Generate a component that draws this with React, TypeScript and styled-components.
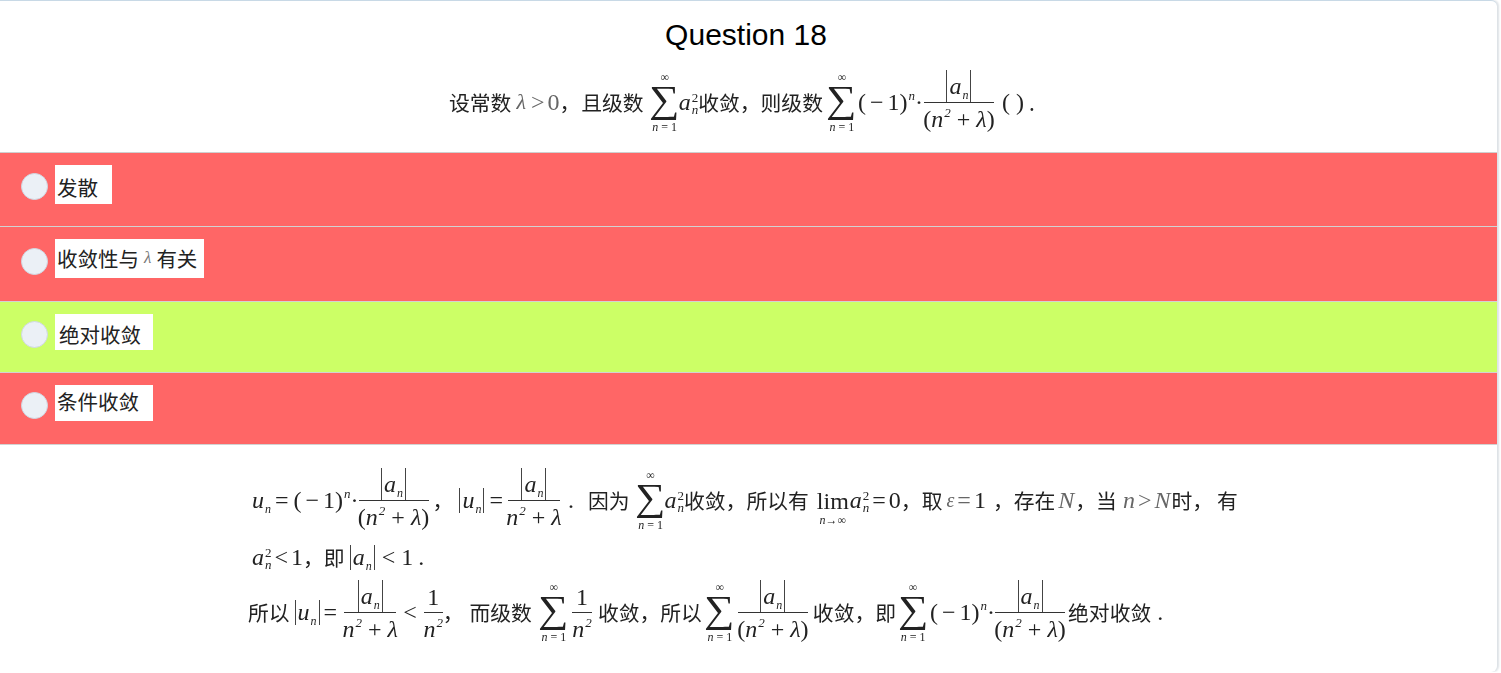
import React, { FC, ReactNode } from "react";
import styled, { createGlobalStyle } from "styled-components";

const GlobalStyle = createGlobalStyle`
  html, body { margin: 0; padding: 0; background: #fff; overflow: hidden; }
  body { font-family: "Liberation Sans", Arial, sans-serif; }
`;

const Card = styled.div`
  width: 1497px;
  height: 672px;
  box-sizing: border-box;
  background: #fff;
  border-top: 1px solid #c8d9e6;
  border-radius: 0 6px 6px 0;
  box-shadow: 2px 0 2px #dde2e6;
  overflow: hidden;
`;

const Title = styled.h2`
  margin: 0;
  height: 65px;
  padding-top: 16px;
  padding-right: 5px;
  box-sizing: border-box;
  text-align: center;
  font-size: 30px;
  line-height: 36px;
  font-weight: 400;
  color: #000;
`;

const Question = styled.div`
  height: 86px;
  box-sizing: border-box;
  padding: 0 0 14px 449px;
  display: flex;
`;

const Options = styled.div`
  display: flex;
  flex-direction: column;
  border-top: 1px solid #cfcfcf;
`;

const OptionRow = styled.div<{ $h: number; $ok?: boolean }>`
  height: ${(p) => p.$h}px;
  box-sizing: border-box;
  padding: 12px 0 0 21px;
  display: flex;
  align-items: flex-start;
  background: ${(p) => (p.$ok ? "#ccff66" : "#ff6666")};
  border-bottom: 1px solid #d2d2d2;
`;

const Radio = styled.span<{ $top: number }>`
  width: 27px;
  height: 27px;
  margin-top: ${(p) => p.$top}px;
  margin-right: 7px;
  box-sizing: border-box;
  border-radius: 50%;
  background: #ebf0f6;
  border: 1px solid #cfd8e3;
  flex: none;
`;

const OptionLabel = styled.span<{ $w: number; $h: number; $lead?: number; $down?: number; $up?: number }>`
  width: ${(p) => p.$w}px;
  height: ${(p) => p.$h}px;
  box-sizing: border-box;
  padding: ${(p) => p.$down ?? 0}px 0 ${(p) => p.$up ?? 0}px ${(p) => p.$lead ?? 2}px;
  background: #fff;
  display: flex;
  align-items: center;
  font-family: "Noto Sans CJK SC", sans-serif;
  font-size: 20.5px;
  color: #222;
  white-space: nowrap;
`;

const LabelSymbol = styled.i`
  margin: 0 5px;
  font-family: "Liberation Serif", serif;
  font-size: 17px;
  color: #777;
`;

const Explain = styled.div`
  padding: 14px 0 0 252px;
  display: flex;
  flex-direction: column;
`;

const MathLine = styled.div<{ $h: number; $shift?: number }>`
  height: ${(p) => p.$h}px;
  margin-left: ${(p) => p.$shift ?? 0}px;
  display: flex;
  align-items: center;
  white-space: nowrap;
  font-family: "Liberation Serif", serif;
  font-size: 24px;
  color: #222;
  filter: blur(0.35px);
`;

const Cjk = styled.span<{ $l?: number; $r?: number }>`
  font-family: "Noto Sans CJK SC", sans-serif;
  font-size: 20.8px;
  margin: 0 ${(p) => p.$r ?? 0}px 0 ${(p) => p.$l ?? 0}px;
`;

const Mi = styled.i<{ $size?: number; $light?: boolean }>`
  font-size: ${(p) => p.$size ?? 24}px;
  color: ${(p) => (p.$light ? "#666" : "inherit")};
`;

const Mo = styled.span<{ $l?: number; $r?: number; $light?: boolean }>`
  margin: 0 ${(p) => p.$r ?? 0}px 0 ${(p) => p.$l ?? 0}px;
  color: ${(p) => (p.$light ? "#666" : "inherit")};
`;

const Sub = styled.i`
  font-size: 12px;
  line-height: 0;
  vertical-align: -5px;
  margin-left: 1px;
`;

const Sup = styled.i`
  font-size: 13px;
  line-height: 0;
  vertical-align: 10px;
  margin-left: 1px;
`;

const Script = styled.span`
  display: inline-flex;
  flex-direction: column;
  font-size: 13px;
  line-height: 12px;
  margin-left: 1px;
  padding-top: 3px;
`;

const ScriptSlot = styled.span<{ $italic?: boolean }>`
  height: 12px;
  font-style: ${(p) => (p.$italic ? "italic" : "normal")};
`;

const FracBox = styled.span<{ $w: number; $l?: number }>`
  width: ${(p) => p.$w}px;
  margin-left: ${(p) => p.$l ?? 0}px;
  display: inline-flex;
  flex-direction: column;
  align-items: center;
  flex: none;
`;

const FracTop = styled.span`
  height: 34px;
  width: 100%;
  display: flex;
  justify-content: center;
  align-items: flex-end;
  border-bottom: 1px solid #333;
`;

const FracBottom = styled.span`
  height: 33px;
  display: flex;
  align-items: center;
`;

const Bars = styled.span<{ $h: number }>`
  display: inline-flex;
  align-items: center;
  height: ${(p) => p.$h}px;
  padding: 0 2px;
  border-left: 1.5px solid #444;
  border-right: 1.5px solid #444;
`;

const SumBox = styled.span<{ $r?: number }>`
  width: 32px;
  margin-right: ${(p) => p.$r ?? -2}px;
  display: inline-flex;
  flex-direction: column;
  align-items: center;
  flex: none;
`;

const SumLimit = styled.span`
  font-size: 12px;
  line-height: 12px;
  height: 12px;
  white-space: nowrap;
`;

const SumGlyph = styled.span`
  font-size: 38px;
  line-height: 32px;
  height: 38px;
  transform: scaleX(1.12);
`;

const LimBox = styled.span`
  display: inline-flex;
  flex-direction: column;
  align-items: center;
  padding-top: 14px;
  margin: 0 1px 0 8px;
  flex: none;
`;

const LimWord = styled.span`
  line-height: 26px;
`;

const OneCell = styled.span`
  line-height: 30px;
`;

const SignedRun = styled.span`
  word-spacing: -2px;
`;

const Frac: FC<{ w: number; l?: number; top: ReactNode; bottom: ReactNode }> = ({ w, l, top, bottom }) => (
  <FracBox $w={w} $l={l}>
    <FracTop>{top}</FracTop>
    <FracBottom>{bottom}</FracBottom>
  </FracBox>
);

const Sum: FC<{ r?: number }> = ({ r }) => (
  <SumBox $r={r}>
    <SumLimit>∞</SumLimit>
    <SumGlyph>∑</SumGlyph>
    <SumLimit>
      <i>n</i> = 1
    </SumLimit>
  </SumBox>
);

const ASquared: FC = () => (
  <>
    <Mi>a</Mi>
    <Script>
      <ScriptSlot>2</ScriptSlot>
      <ScriptSlot $italic>n</ScriptSlot>
    </Script>
  </>
);

const Indexed: FC<{ name: string }> = ({ name }) => (
  <span>
    <Mi>{name}</Mi>
    <Sub>n</Sub>
  </span>
);

const AbsA: FC = () => (
  <Bars $h={32}>
    <Indexed name="a" />
  </Bars>
);

const AbsSmall: FC<{ name: string }> = ({ name }) => (
  <Bars $h={25}>
    <Indexed name={name} />
  </Bars>
);

const Denominator: FC = () => (
  <span>
    (<Mi>n</Mi>
    <Sup>2</Sup> + <Mi>λ</Mi>)
  </span>
);

const PlainDenominator: FC = () => (
  <span>
    <Mi>n</Mi>
    <Sup>2</Sup> + <Mi>λ</Mi>
  </span>
);

const NSquared: FC = () => (
  <span>
    <Mi>n</Mi>
    <Sup>2</Sup>
  </span>
);

const MinusOne: FC = () => (
  <SignedRun>
    ( − 1)<Sup>n</Sup>·
  </SignedRun>
);

export default function App() {
  return (
    <Card>
      <GlobalStyle />
      <Title>Question 18</Title>
      <Question>
        <MathLine $h={72}>
          <Cjk $r={5}>设常数</Cjk>
          <Mi $size={22} $light>
            λ
          </Mi>
          <Mo $l={5} $r={3} $light>
            &gt;
          </Mo>
          <Mo $light>0</Mo>
          <Cjk>，</Cjk>
          <Cjk $l={1} $r={5}>
            且级数
          </Cjk>
          <Sum />
          <ASquared />
          <Cjk $r={3}>收敛，则级数</Cjk>
          <Sum r={0} />
          <MinusOne />
          <Frac w={70} l={1} top={<AbsA />} bottom={<Denominator />} />
          <Mo $l={8} $r={5}>
            ( )
          </Mo>
          <Cjk>.</Cjk>
        </MathLine>
      </Question>
      <Options>
        <OptionRow $h={74}>
          <Radio $top={8} />
          <OptionLabel $w={57} $h={39} $down={5}>
            发散
          </OptionLabel>
        </OptionRow>
        <OptionRow $h={75}>
          <Radio $top={9} />
          <OptionLabel $w={149} $h={39} $up={2}>
            收敛性与<LabelSymbol>λ</LabelSymbol>有关
          </OptionLabel>
        </OptionRow>
        <OptionRow $h={71} $ok>
          <Radio $top={7} />
          <OptionLabel $w={98} $h={36} $lead={4} $down={4}>
            绝对收敛
          </OptionLabel>
        </OptionRow>
        <OptionRow $h={72}>
          <Radio $top={7} />
          <OptionLabel $w={98} $h={36} $up={4}>
            条件收敛
          </OptionLabel>
        </OptionRow>
      </Options>
      <Explain>
        <MathLine $h={82}>
          <Indexed name="u" />
          <Mo $l={4} $r={5}>
            =
          </Mo>
          <MinusOne />
          <Frac w={70} top={<AbsA />} bottom={<Denominator />} />
          <Cjk $l={4} $r={6}>
            ，
          </Cjk>
          <AbsSmall name="u" />
          <Mo $l={5} $r={5}>
            =
          </Mo>
          <Frac w={52} top={<AbsA />} bottom={<PlainDenominator />} />
          <Mo $l={8} $r={8}>
            .
          </Mo>
          <Cjk $l={6} $r={5}>
            因为
          </Cjk>
          <Sum />
          <ASquared />
          <Cjk>收敛，所以有</Cjk>
          <LimBox>
            <LimWord>lim</LimWord>
            <SumLimit>
              <i>n</i>→∞
            </SumLimit>
          </LimBox>
          <ASquared />
          <Mo $l={3} $r={3}>
            =
          </Mo>
          <Mo>0</Mo>
          <Cjk $r={4}>，取</Cjk>
          <Mi $size={20} $light>
            ε
          </Mi>
          <Mo $l={3} $r={3} $light>
            =
          </Mo>
          <Mo>1</Mo>
          <Cjk $l={7} $r={3}>
            ，存在
          </Cjk>
          <Mi $light>N</Mi>
          <Cjk $l={1} $r={6}>
            ，当
          </Cjk>
          <Mi $light>n</Mi>
          <Mo $l={3} $r={3} $light>
            &gt;
          </Mo>
          <Mi $light>N</Mi>
          <Cjk $l={1}>时，</Cjk>
          <Cjk $l={4}>有</Cjk>
        </MathLine>
        <MathLine $h={32}>
          <ASquared />
          <Mo $l={3} $r={3}>
            &lt;
          </Mo>
          <Mo>1</Mo>
          <Cjk $r={5}>，即</Cjk>
          <AbsSmall name="a" />
          <Mo $l={7} $r={6}>
            &lt;
          </Mo>
          <Mo>1</Mo>
          <Mo $l={5}>.</Mo>
        </MathLine>
        <MathLine $h={78} $shift={-4}>
          <Cjk $r={5}>所以</Cjk>
          <AbsSmall name="u" />
          <Mo $l={4} $r={7}>
            =
          </Mo>
          <Frac w={52} top={<AbsA />} bottom={<PlainDenominator />} />
          <Mo $l={7} $r={7}>
            &lt;
          </Mo>
          <Frac w={19} top={<OneCell>1</OneCell>} bottom={<NSquared />} />
          <Cjk>，</Cjk>
          <Cjk $l={6} $r={6}>
            而级数
          </Cjk>
          <Sum r={2} />
          <Frac w={20} top={<OneCell>1</OneCell>} bottom={<NSquared />} />
          <Cjk $l={6} $r={2}>
            收敛，所以
          </Cjk>
          <Sum />
          <Frac w={70} l={4} top={<AbsA />} bottom={<Denominator />} />
          <Cjk $l={5} $r={1}>
            收敛，即
          </Cjk>
          <Sum r={1} />
          <MinusOne />
          <Frac w={70} top={<AbsA />} bottom={<Denominator />} />
          <Cjk $l={3}>绝对收敛</Cjk>
          <Mo $l={6}>.</Mo>
        </MathLine>
      </Explain>
    </Card>
  );
}
